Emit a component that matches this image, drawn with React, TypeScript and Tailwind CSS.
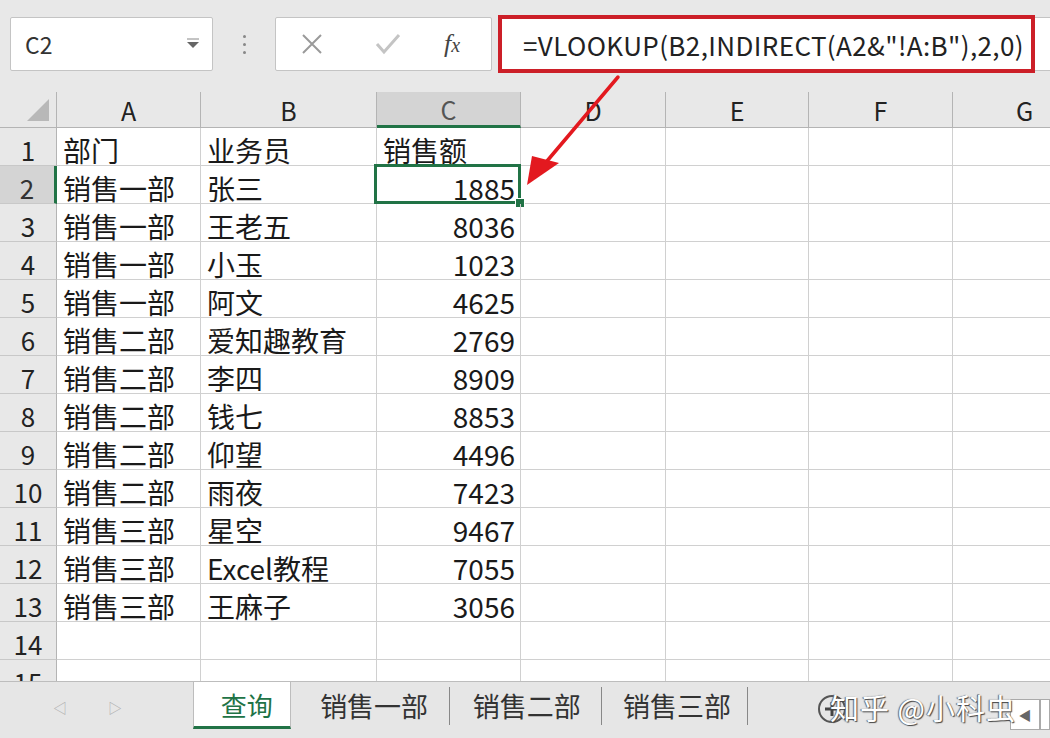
import React from "react";

const font = { fontFamily: '"Noto Sans CJK SC", "Noto Sans", sans-serif' };

const data = [
  ["部门", "业务员", "销售额"],
  ["销售一部", "张三", "1885"],
  ["销售一部", "王老五", "8036"],
  ["销售一部", "小玉", "1023"],
  ["销售一部", "阿文", "4625"],
  ["销售二部", "爱知趣教育", "2769"],
  ["销售二部", "李四", "8909"],
  ["销售二部", "钱七", "8853"],
  ["销售二部", "仰望", "4496"],
  ["销售二部", "雨夜", "7423"],
  ["销售三部", "星空", "9467"],
  ["销售三部", "Excel教程", "7055"],
  ["销售三部", "王麻子", "3056"],
  ["", "", ""],
  ["", "", ""],
];

const cols = ["A", "B", "C", "D", "E", "F", "G"];
const gridCols = "grid grid-cols-[57px_144px_176px_144px_145px_143px_144px_144px]";

const tabs = [
  { name: "销售一部", w: "w-[160px] pl-[8px]" },
  { name: "销售二部", w: "w-[153px] pl-[2px]" },
  { name: "销售三部", w: "w-[147px] pl-[4px]" },
];

export default function App() {
  return (
    <div className="relative w-[1050px] h-[738px] overflow-hidden bg-[#e8e8e8] text-[#1a1a1a]" style={font}>
      {/* formula bar */}
      <div className="flex items-start h-[92px] pt-[17px]">
        <div className="ml-[10px] w-[203px] h-[54px] bg-white border border-[#c4c4c4] rounded-[2px] flex items-center justify-between pl-[14px] pr-[12px]">
          <span className="text-[23px] text-[#333]">C2</span>
          <svg width="14" height="12" viewBox="0 0 14 12">
            <path d="M1 1 L13 1" stroke="#888" strokeWidth="1" />
            <path d="M1 4 L13 4 L7 10 Z" fill="#666" />
          </svg>
        </div>
        <div className="w-[62px] h-[54px] flex flex-col items-center justify-center gap-[5px]">
          <span className="w-[3px] h-[3px] bg-[#888] rounded-full" />
          <span className="w-[3px] h-[3px] bg-[#888] rounded-full" />
          <span className="w-[3px] h-[3px] bg-[#888] rounded-full" />
        </div>
        <div className="w-[217px] h-[54px] bg-white border border-[#c4c4c4] rounded-[2px] flex items-center">
          <svg className="ml-[25px]" width="22" height="22" viewBox="0 0 22 22">
            <path d="M2 2 L20 20 M20 2 L2 20" stroke="#9a9a9a" strokeWidth="2" />
          </svg>
          <svg className="ml-[52px]" width="26" height="22" viewBox="0 0 26 22">
            <path d="M2 11 L9 19 L24 2" stroke="#c4c4c4" strokeWidth="3" fill="none" />
          </svg>
          <span className="ml-[43px] italic text-[26px] leading-none text-[#444]" style={{ fontFamily: '"Liberation Serif", serif' }}>
            f<span className="text-[20px]">x</span>
          </span>
        </div>
        <div className="ml-[6px] -mt-[2px] w-[537px] h-[58px] bg-white border-[4px] border-[#cc1f28] flex items-center pl-[21px]">
          <span className="text-[26px] text-[#222] tracking-[0.4px] whitespace-nowrap">=VLOOKUP(B2,INDIRECT(A2&"!A:B"),2,0)</span>
        </div>
        <div className="flex-1 h-[54px] bg-white border-y border-[#c4c4c4]" />
      </div>

      {/* sheet grid */}
      <div className="h-[589px] overflow-hidden bg-white">
        <div className={gridCols + " grid-rows-[36px] h-[36px] bg-[#e8e8e8]"}>
          <div className="relative border-r border-b border-[#b4b4b4]">
            <svg className="absolute right-[7px] bottom-[6px]" width="22" height="22" viewBox="0 0 22 22">
              <path d="M22 0 L22 22 L0 22 Z" fill="#b8b8b8" />
            </svg>
          </div>
          {cols.map((c) => (
            <div
              key={c}
              className={
                c === "C"
                  ? "flex items-center justify-center pt-[2px] leading-none text-[25px] text-[#555] bg-[#d4d4d4] border-r border-[#b4b4b4] border-b-[3px] border-b-[#217346]"
                  : "flex items-center justify-center pt-[2px] leading-none text-[25px] text-[#222] border-r border-b border-[#b4b4b4]"
              }
            >
              {c}
            </div>
          ))}
        </div>
        {data.map((r, i) => (
          <div key={i} className={gridCols + " grid-rows-[38px] h-[38px]"}>
            <div
              className={
                i === 1
                  ? "flex items-center justify-center pt-[6px] leading-none text-[26px] text-[#333] bg-[#d4d4d4] border-b border-[#c8c8c8] border-r-[3px] border-r-[#217346]"
                  : "flex items-center justify-center pt-[6px] leading-none text-[26px] text-[#222] bg-[#e8e8e8] border-b border-[#c8c8c8] border-r border-r-[#b4b4b4]"
              }
            >
              {i + 1}
            </div>
            <div className="flex items-center pl-[6px] pt-[7px] text-[28px] leading-none whitespace-nowrap border-r border-b border-[#d0d0d0]">{r[0]}</div>
            <div className="flex items-center pl-[6px] pt-[7px] text-[28px] leading-none whitespace-nowrap border-r border-b border-[#d0d0d0]">{r[1]}</div>
            <div
              className={
                "relative flex items-center pt-[7px] text-[28px] leading-none whitespace-nowrap border-r border-b border-[#d0d0d0] " +
                (i === 0 ? "pl-[6px]" : "justify-end pr-[5px]")
              }
            >
              {r[2]}
              {i === 1 && (
                <>
                  <div className="absolute -left-[3px] -top-[2px] -right-[1px] -bottom-[1px] border-[3px] border-[#217346]" />
                  <div className="absolute -right-[5px] -bottom-[5px] w-[10px] h-[10px] bg-[#217346] border border-white" />
                </>
              )}
            </div>
            {[0, 1, 2, 3, 4].map((k) => (
              <div key={k} className="border-r border-b border-[#d0d0d0]" />
            ))}
          </div>
        ))}
      </div>

      {/* sheet tabs */}
      <div className="relative h-[57px] flex items-start bg-[#e6e6e6] border-t border-[#bdbdbd]">
        <div className="w-[194px] h-[50px] flex items-center text-[#b0b0b0] text-[14px]">
          <span className="ml-[53px]">◁</span>
          <span className="ml-[41px]">▷</span>
        </div>
        <div className="-mt-px w-[98px] h-[48px] bg-white border-x border-t border-[#bdbdbd] border-b-[3px] border-b-[#217346] flex items-center justify-center pl-[10px] text-[26px] text-[#217346]">
          查询
        </div>
        {tabs.map((t) => (
          <div key={t.name} className={t.w + " h-[48px] flex items-center justify-center text-[27px] text-[#333] relative"}>
            {t.name}
            <span className="absolute right-0 top-[5px] h-[38px] w-px bg-[#888]" />
          </div>
        ))}
        <div className="ml-[69px] mt-[12px]">
          <svg width="30" height="30" viewBox="0 0 30 30">
            <circle cx="15" cy="15" r="13" fill="none" stroke="#555" strokeWidth="2" />
            <path d="M15 8 L15 22 M8 15 L22 15" stroke="#444" strokeWidth="3" />
          </svg>
        </div>
        <div className="ml-[130px] mt-[12px] flex flex-col gap-[5px] items-center">
          <span className="w-[3px] h-[3px] bg-[#777] rounded-full" />
          <span className="w-[3px] h-[3px] bg-[#777] rounded-full" />
          <span className="w-[3px] h-[3px] bg-[#777] rounded-full" />
        </div>
        <div className="ml-[30px] mt-[17px] w-[30px] h-[31px] bg-white border border-[#aaa] flex items-center justify-center text-[13px] text-[#666]">
          ◀
        </div>
        <div className="mt-[17px] w-[10px] h-[31px] bg-white border border-[#aaa]" />
        <div
          className="absolute left-[830px] top-[4px] text-[29px] text-white tracking-[1px] whitespace-nowrap"
          style={{ textShadow: "1px 1px 1px #444, -1px 0 1px #666" }}
        >
          知乎 @小科虫
        </div>
      </div>

      {/* red arrow */}
      <svg className="absolute left-0 top-0 pointer-events-none" width="1050" height="738" viewBox="0 0 1050 738">
        <path d="M618 77 L542 167" stroke="#e3191f" strokeWidth="3.5" strokeLinecap="round" />
        <path d="M527 185 L532 156 L559 163 Z" fill="#e3191f" />
      </svg>
    </div>
  );
}
